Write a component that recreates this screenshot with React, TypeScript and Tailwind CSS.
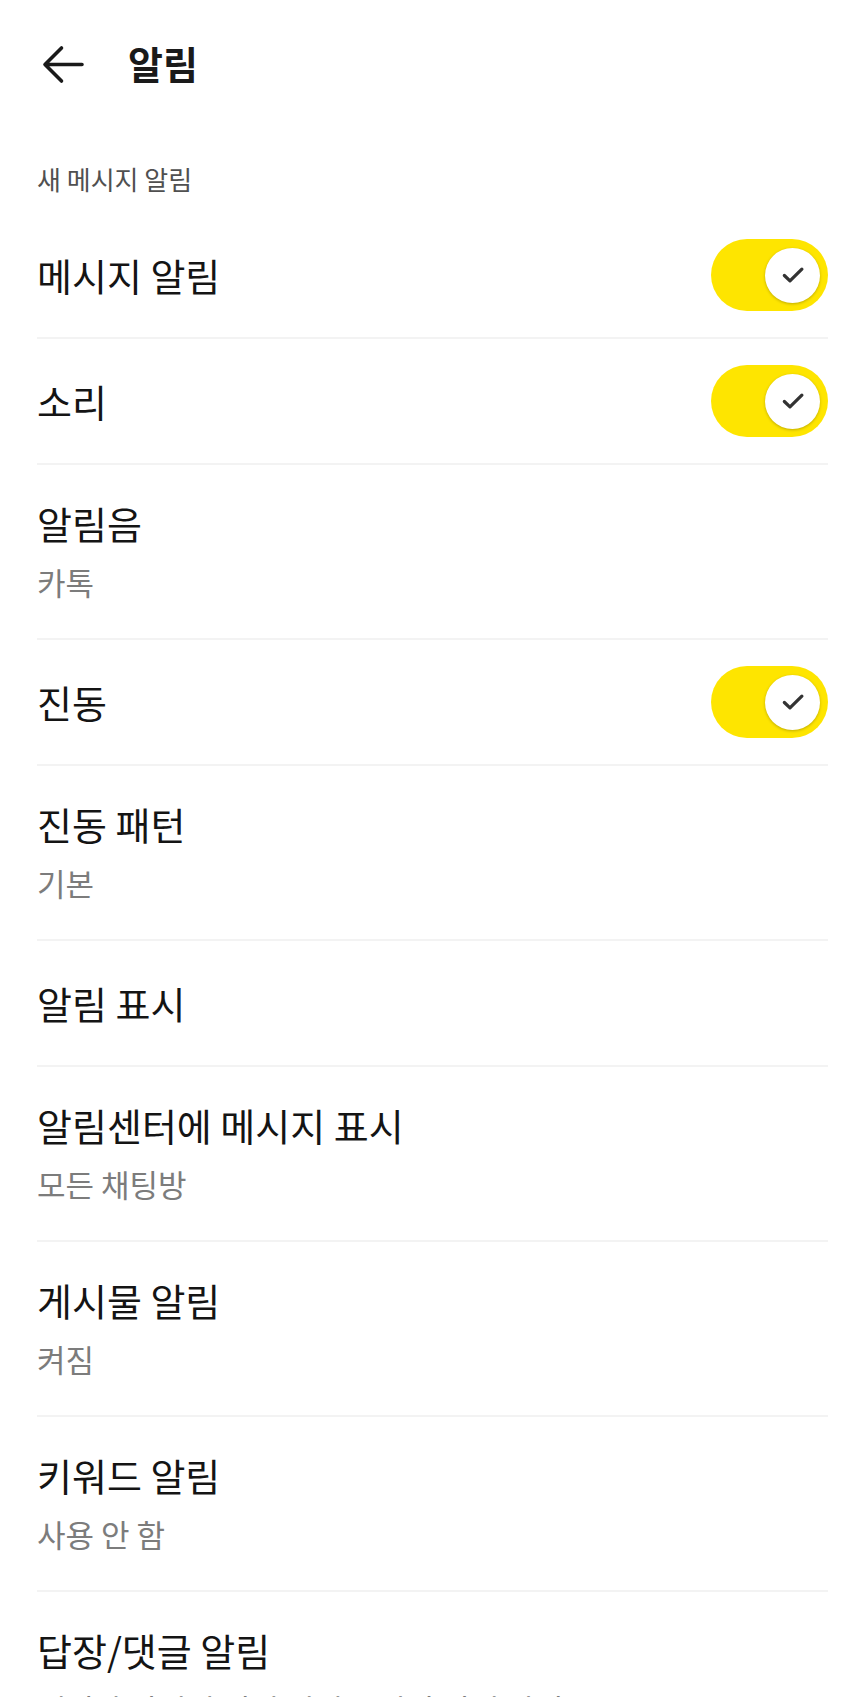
import React from "react";

function Toggle() {
  return (
    <div className="relative h-[72px] w-[117px] shrink-0 rounded-full bg-[#fee500]">
      <div className="absolute right-[8px] top-[8.5px] flex h-[55px] w-[55px] items-center justify-center rounded-full bg-white shadow-[0_1px_3px_rgba(0,0,0,0.25)]">
        <svg width="28" height="28" viewBox="0 0 24 24" fill="none">
          <path d="M4.6 12.4l4.8 4.6L19.6 7" stroke="#333333" strokeWidth="2.8" strokeLinecap="round" strokeLinejoin="round" />
        </svg>
      </div>
    </div>
  );
}

function SingleRow({ title, toggle }: { title: string; toggle?: boolean }) {
  return (
    <div className="flex h-[126px] items-center justify-between border-b-2 border-[#f3f3f3]">
      <span className="-mt-[1px] text-[38px] leading-[44px] text-[#141414]">{title}</span>
      {toggle && <Toggle />}
    </div>
  );
}

function DoubleRow({ title, sub, last }: { title: string; sub: string; last?: boolean }) {
  return (
    <div className={"flex h-[175px] flex-col pt-[36px] " + (last ? "" : "border-b-2 border-[#f3f3f3]")}>
      <span className="whitespace-nowrap text-[38px] leading-[44px] text-[#141414]">{title}</span>
      <span className="mt-[19px] whitespace-nowrap text-[31px] leading-[36px] text-[#7c7c7c]">{sub}</span>
    </div>
  );
}

export default function App() {
  return (
    <div
      className="h-[1697px] w-[864px] overflow-hidden bg-white"
      style={{ fontFamily: '"Noto Sans CJK KR", "Noto Sans", sans-serif' }}
    >
      <div className="flex h-[130px] items-center pl-[42px]">
        <svg width="42" height="40" viewBox="0 0 42 40" fill="none" className="shrink-0">
          <path d="M40 19.5H3M19.5 3L3 19.5L19.5 36" stroke="#1a1a1a" strokeWidth="3.6" strokeLinecap="round" strokeLinejoin="round" />
        </svg>
        <span className="ml-[44px] -mt-[4px] text-[38px] font-bold leading-[46px] text-[#1a1a1a]">알림</span>
      </div>
      <div className="flex h-[83px] items-center px-[37px] pt-[15px]">
        <span className="text-[26px] leading-[32px] text-[#505050]">새 메시지 알림</span>
      </div>
      <div className="pl-[37px] pr-[36px]">
        <SingleRow title="메시지 알림" toggle />
        <SingleRow title="소리" toggle />
        <DoubleRow title="알림음" sub="카톡" />
        <SingleRow title="진동" toggle />
        <DoubleRow title="진동 패턴" sub="기본" />
        <SingleRow title="알림 표시" />
        <DoubleRow title="알림센터에 메시지 표시" sub="모든 채팅방" />
        <DoubleRow title="게시물 알림" sub="켜짐" />
        <DoubleRow title="키워드 알림" sub="사용 안 함" />
        <DoubleRow title="답장/댓글 알림" sub="채팅방 알림이 꺼져 있어도 답장 알림 받기" last />
      </div>
    </div>
  );
}
